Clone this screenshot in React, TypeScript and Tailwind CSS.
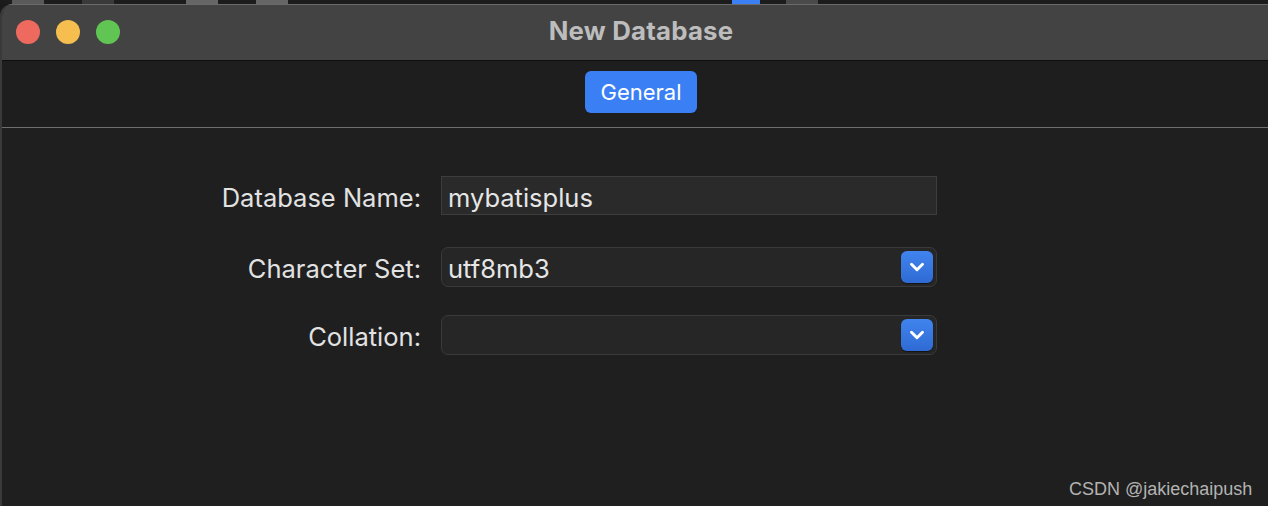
import { ChevronDown } from 'lucide-react'

const font = { fontFamily: 'Inter, "Noto Sans", sans-serif' }

function SelectBox({ value }: { value: string }) {
  return (
    <div className="flex h-[40px] w-[496px] items-center justify-between rounded-[7px] border border-[#3a3a3a] bg-[#262626] pl-[6px] pr-[3px]">
      <span className="pt-[3px] text-[25.5px] leading-none text-[#e6e6e6]">{value}</span>
      <div className="flex h-[32px] w-[32px] items-center justify-center rounded-[6px] bg-gradient-to-b from-[#4184ee] to-[#2f6ad4] shadow-[0_1px_1px_rgba(0,0,0,0.5)]">
        <ChevronDown className="h-[22px] w-[22px] text-white" strokeWidth={3.2} />
      </div>
    </div>
  )
}

export default function App() {
  return (
    <div className="flex h-[506px] w-[1268px] flex-col overflow-hidden bg-[#1a1a1a]" style={font}>
      {/* bits of the app behind the sheet */}
      <div className="flex h-[4px] shrink-0 bg-[#1c1c1c]">
        <div className="ml-[12px] w-[32px] bg-[#5a5a5a]" />
        <div className="ml-[38px] w-[32px] bg-[#3a3a3a]" />
        <div className="ml-[72px] w-[32px] bg-[#666666]" />
        <div className="ml-[38px] w-[32px] bg-[#666666]" />
        <div className="ml-[444px] w-[28px] bg-[#3b7ff5]" />
        <div className="ml-[26px] w-[32px] bg-[#4a4a4a]" />
      </div>

      <div className="flex w-[1280px] flex-1 flex-col overflow-hidden rounded-t-[12px] border-l-2 border-[#3a3a3a] bg-[#1f1f1f]">
        {/* title bar */}
        <div className="relative flex h-[57px] shrink-0 items-center justify-center border-t border-b border-t-[#6a6a6a] border-b-[#0e0e0e] bg-[#434343]">
          <div className="absolute left-[14px] top-[15px] flex gap-[16px]">
            <span className="h-[24px] w-[24px] rounded-full bg-[#ee6a5f]" />
            <span className="h-[24px] w-[24px] rounded-full bg-[#f5be4f]" />
            <span className="h-[24px] w-[24px] rounded-full bg-[#61c554]" />
          </div>
          <h1 className="mt-[-2px] text-[25.8px] font-bold tracking-[0.2px] text-[#bdbdbd]">New Database</h1>
        </div>

        {/* tabs */}
        <div className="flex h-[67px] shrink-0 items-center justify-center border-b border-[#6e6e6e] bg-[#1e1e1e]">
          <button className="mt-[-5px] h-[42px] w-[112px] rounded-[6px] bg-[#3b7ff5] pt-[1px] text-[22px] text-white">
            General
          </button>
        </div>

        {/* form */}
        <div className="relative flex-1 pt-[48px] text-[25.5px] leading-none">
          <div className="grid grid-cols-[419px_496px] items-center gap-x-[20px]">
            <label className="pt-[4px] text-right text-[#e2e2e2]">Database Name:</label>
            <div className="flex h-[39px] items-center border border-[#3d3d3d] bg-[#2a2a2a] px-[6px] pt-[4px] text-[#e6e6e6]">
              mybatisplus
            </div>

            <label className="mt-[32px] pt-[4px] text-right text-[#e2e2e2]">Character Set:</label>
            <div className="mt-[32px]">
              <SelectBox value="utf8mb3" />
            </div>

            <label className="mt-[28px] pt-[3px] text-right text-[#e2e2e2]">Collation:</label>
            <div className="mt-[28px]">
              <SelectBox value="" />
            </div>
          </div>

          <div
            className="absolute bottom-[8px] left-[1067px] text-[18px] text-[#b3b3b3]"
            style={{ fontFamily: '"Liberation Sans", Arial, sans-serif' }}
          >
            CSDN @jakiechaipush
          </div>
        </div>
      </div>
    </div>
  )
}
